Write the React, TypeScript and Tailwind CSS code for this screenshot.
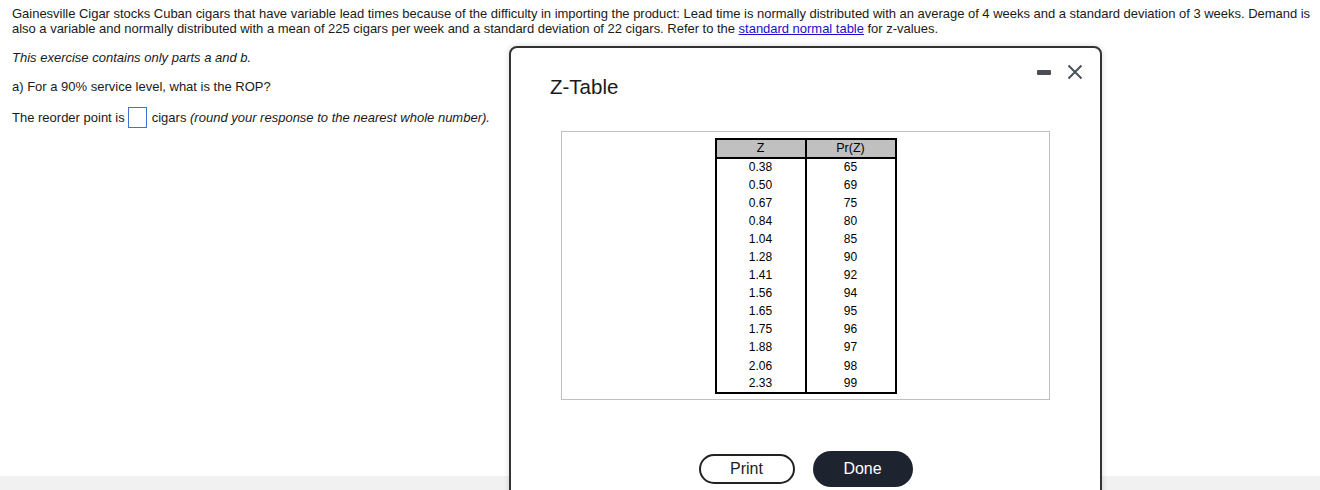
import React from 'react';

const rows: [string, string][] = [
  ['0.38', '65'],
  ['0.50', '69'],
  ['0.67', '75'],
  ['0.84', '80'],
  ['1.04', '85'],
  ['1.28', '90'],
  ['1.41', '92'],
  ['1.56', '94'],
  ['1.65', '95'],
  ['1.75', '96'],
  ['1.88', '97'],
  ['2.06', '98'],
  ['2.33', '99'],
];

const ZTableModal = () => {
  return (
    <div className="absolute left-[509px] top-[46px] w-[593px] h-[470px] bg-white border-2 border-[#333] rounded-t-[8px] shadow-[0_0_6px_rgba(0,0,0,0.15)]">
      <div className="absolute right-[17px] top-[16px] flex items-center gap-[16px]">
        <button className="w-[14px] h-[5px] rounded-[1px] bg-[#4a4f55]" aria-label="Minimize" />
        <button className="w-[16px] h-[16px]" aria-label="Close">
          <svg viewBox="0 0 16 16" width="16" height="16">
            <path d="M1.5 1.5 L14.5 14.5 M14.5 1.5 L1.5 14.5" stroke="#4a525a" strokeWidth="2" />
          </svg>
        </button>
      </div>

      <h2 className="pl-[39px] pt-[25px] text-[20.5px] leading-[28px] text-[#1a1a1a] font-['Liberation_Sans',Arial,sans-serif]">
        Z-Table
      </h2>

      <div className="mx-[50px] mt-[30px] border border-[#c0c0c0] pt-[6px] pb-[5px] flex justify-center">
        <table className="border-collapse border-2 border-black text-[12px] text-black font-['Liberation_Sans',Arial,sans-serif]">
          <thead>
            <tr className="bg-[#c0c0c0]">
              <th className="w-[90px] h-[19px] font-normal text-[12.5px] leading-[15px] border-r-2 border-b-2 border-black">Z</th>
              <th className="w-[90px] h-[19px] font-normal text-[12.5px] leading-[15px] border-b-2 border-black">Pr(Z)</th>
            </tr>
          </thead>
          <tbody>
            {rows.map(([z, p]) => (
              <tr key={z}>
                <td className="h-[18.1px] text-center leading-[15px] border-r-2 border-black">{z}</td>
                <td className="h-[18.1px] text-center leading-[15px]">{p}</td>
              </tr>
            ))}
          </tbody>
        </table>
      </div>

      <div className="mt-[51px] flex justify-center items-center gap-[18px] font-['Liberation_Sans',Arial,sans-serif]">
        <button className="w-[96px] h-[30px] rounded-full border-2 border-[#222] text-[16px] text-[#222] bg-white">
          Print
        </button>
        <button className="w-[100px] h-[36px] rounded-full bg-[#1e2330] text-[16px] text-white">
          Done
        </button>
      </div>
    </div>
  );
};

export default function App() {
  return (
    <div className="relative w-[1320px] h-[490px] overflow-hidden bg-white font-['Liberation_Sans',Arial,sans-serif] text-[13px] text-[#1a1a1a]">
      <div className="pl-[12px] pr-0 pt-[6px]">
        <p className="leading-[15px] tracking-[-0.02px]">
          Gainesville Cigar stocks Cuban cigars that have variable lead times because of the difficulty in importing the product: Lead time is normally distributed with an average of 4 weeks and a standard deviation of 3 weeks. Demand is also a variable and normally distributed with a mean of 225 cigars per week and a standard deviation of 22 cigars. Refer to the{' '}
          <a href="#" className="text-[#1a0dcc] underline">standard normal table</a> for z-values.
        </p>
        <p className="mt-[14px] leading-[15px] italic">This exercise contains only parts a and b.</p>
        <p className="mt-[14px] leading-[15px]">a) For a 90% service level, what is the ROP?</p>
        <div className="mt-[13px] flex items-center leading-[15px]">
          <span>The reorder point is</span>
          <span className="ml-[3px] mr-[5px] inline-block w-[19px] h-[21px] border border-[#3b73d6]" />
          <span>
            cigars <i>(round your response to the nearest whole number).</i>
          </span>
        </div>
      </div>

      <div className="absolute left-0 right-0 bottom-0 h-[14px] bg-[#f1f1f1]" />

      <ZTableModal />
    </div>
  );
}
